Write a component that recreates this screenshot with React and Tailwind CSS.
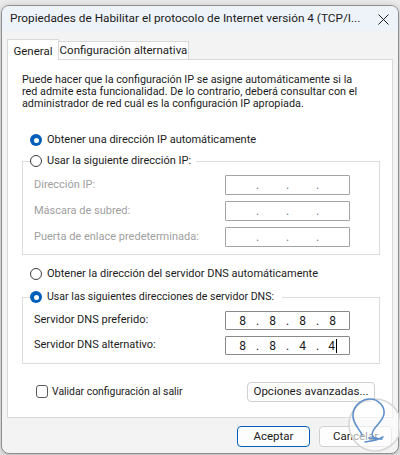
import React from 'react';

// Windows 11 style "Propiedades de TCP/IPv4" dialog

function Radio({ checked }) {
  if (checked) {
    return (
      <span className="w-[12px] h-[12px] rounded-full bg-[#005fb8] flex items-center justify-center shrink-0">
        <span className="w-[5px] h-[5px] rounded-full bg-white" />
      </span>
    );
  }
  return <span className="w-[12px] h-[12px] rounded-full border border-[#3c3c3c] bg-white shrink-0" />;
}

function IpBox({ parts, disabled, cursor, height }) {
  return (
    <div
      className={`w-[125px] ${height} border ${disabled ? 'border-[#a3a3a3]' : 'border-[#8a8a8a]'} bg-white flex items-center pl-[9px] rounded-[1px]`}
    >
      {[0, 1, 2, 3].map((i) => (
        <React.Fragment key={i}>
          <span className="w-[15px] flex justify-center items-center text-[12px] text-[#1b1b1b]">
            {parts ? parts[i] : ''}
            {cursor && i === 3 && <span className="ml-[1px] w-px h-[14px] bg-black" />}
          </span>
          {i < 3 && (
            <span className={`w-[15px] text-center text-[12px] ${disabled ? 'text-[#6d7d8d]' : 'text-[#1b1b1b]'}`}>.</span>
          )}
        </React.Fragment>
      ))}
    </div>
  );
}

function Row({ label, disabled, children, className }) {
  return (
    <div className={`flex items-center justify-between ${className || ''}`}>
      <span className={`whitespace-nowrap ${disabled ? 'text-[#a0a0a0]' : 'text-[#1b1b1b]'}`}>{label}</span>
      {children}
    </div>
  );
}

function App() {
  return (
    <div className="w-[400px] h-[455px] bg-[#ececec] overflow-hidden relative font-['Roboto',sans-serif] text-[11px] text-[#1b1b1b]">
      {/* dialog window */}
      <div className="ml-[1px] mt-[5px] w-[398px] h-[449px] rounded-[8px] border border-[#8e8e8e] bg-[#f3f3f3] overflow-hidden flex flex-col shadow-[0_2px_8px_rgba(0,0,0,0.25)]">
        {/* title bar */}
        <div className="h-[25px] bg-[#eef3f9] flex items-center justify-between pl-[8px] pr-[9px] shrink-0">
          <span className="text-[11.8px] text-[#1b1b1b] whitespace-nowrap">
            Propiedades de Habilitar el protocolo de Internet versión 4 (TCP/I...
          </span>
          <svg width="11" height="11" viewBox="0 0 11 11" className="mt-[1px]">
            <path d="M0.5 0.5 L10.5 10.5 M10.5 0.5 L0.5 10.5" stroke="#1f1f1f" strokeWidth="1" />
          </svg>
        </div>

        <div className="px-[5px] pt-[7px] flex flex-col">
          {/* tabs */}
          <div className="flex items-end h-[21px]">
            <div className="w-[52px] h-[21px] border-x border-t border-[#d9d9d9] bg-white flex justify-center pt-[3px] relative z-10 mb-[-1px] text-[11.5px]">
              General
            </div>
            <div className="w-[130px] h-[18px] border-t border-r border-[#d9d9d9] bg-[#fbfbfb] flex justify-center items-center whitespace-nowrap text-[11.5px]">
              Configuración alternativa
            </div>
          </div>

          {/* panel */}
          <div className="h-[359px] border border-[#d9d9d9] bg-white flex flex-col">
            <p className="pl-[14px] pt-[14px] leading-[12px] whitespace-nowrap text-[10.8px]">
              Puede hacer que la configuración IP se asigne automáticamente si la
              <br />
              red admite esta funcionalidad. De lo contrario, deberá consultar con el
              <br />
              administrador de red cuál es la configuración IP apropiada.
            </p>

            <label className="flex items-center gap-[5px] ml-[22px] mt-[23px] h-[14px] whitespace-nowrap">
              <Radio checked />
              <span>Obtener una dirección IP automáticamente</span>
            </label>

            <fieldset className="ml-[14px] mr-[12px] mt-[7px] border border-[#dcdcdc] pl-[11px] pr-[29px] pb-[7px]">
              <legend className="ml-[-4px] pr-[5px] h-[14px] flex items-center gap-[5px] whitespace-nowrap">
                <Radio />
                <span>Usar la siguiente dirección IP:</span>
              </legend>
              <Row label="Dirección IP:" disabled className="mt-[7px]">
                <IpBox disabled height="h-[20px]" />
              </Row>
              <Row label="Máscara de subred:" disabled className="mt-[6px]">
                <IpBox disabled height="h-[20px]" />
              </Row>
              <Row label="Puerta de enlace predeterminada:" disabled className="mt-[6px]">
                <IpBox disabled height="h-[20px]" />
              </Row>
            </fieldset>

            <label className="flex items-center gap-[5px] ml-[22px] mt-[12px] h-[14px] whitespace-nowrap">
              <Radio />
              <span>Obtener la dirección del servidor DNS automáticamente</span>
            </label>

            <fieldset className="ml-[14px] mr-[12px] mt-[9px] border border-[#dcdcdc] pl-[11px] pr-[29px] pb-[8px]">
              <legend className="ml-[-4px] pr-[8px] h-[14px] flex items-center gap-[5px] whitespace-nowrap">
                <Radio checked />
                <span className="text-[10.6px]">Usar las siguientes direcciones de servidor DNS:</span>
              </legend>
              <Row label="Servidor DNS preferido:" className="mt-[7px]">
                <IpBox parts={['8', '8', '8', '8']} height="h-[19px]" />
              </Row>
              <Row label="Servidor DNS alternativo:" className="mt-[6px]">
                <IpBox parts={['8', '8', '4', '4']} cursor height="h-[19px]" />
              </Row>
            </fieldset>

            <div className="flex items-center justify-between ml-[28px] mr-[17px] mt-[18px]">
              <label className="flex items-center gap-[4px] whitespace-nowrap">
                <span className="w-[12px] h-[13px] rounded-[3px] border border-[#5a5a5a] bg-white" />
                <span className="text-[10.4px]">Validar configuración al salir</span>
              </label>
              <button className="w-[128px] h-[20px] rounded-[4px] border border-[#d0d0d0] bg-[#fdfdfd] text-[11.5px] whitespace-nowrap">
                Opciones avanzadas...
              </button>
            </div>
          </div>

          {/* dialog buttons */}
          <div className="flex justify-end gap-[9px] mt-[8px] mr-[1px]">
            <button className="w-[73px] h-[21px] rounded-[4px] border-[1.5px] border-[#005fb8] bg-[#fdfdfd] text-[11.5px]">
              Aceptar
            </button>
            <button className="w-[73px] h-[21px] rounded-[4px] border border-[#d0d0d0] bg-[#fdfdfd] text-[11.5px]">
              Cancelar
            </button>
          </div>
        </div>
      </div>

      {/* watermark logo */}
      <svg width="60" height="60" viewBox="0 0 60 60" className="absolute left-[345px] top-[397px]">
        <circle cx="30" cy="28" r="26" fill="rgba(255,255,255,0.6)" stroke="#d6d6d6" strokeWidth="1.5" />
        <path
          d="M17 38 C15 32 7 27 8 17 C9 8 17 2 25 2 C33 2 40 9 39 17 C38 24 31 28 28 34 C26 38 28 42 32 41 M20 45 C27 44 33 43 38 40 M24 41 L37 42"
          fill="none"
          stroke="#5d8fcb"
          strokeWidth="1.6"
          strokeLinecap="round"
        />
      </svg>
    </div>
  );
}

export default App;
